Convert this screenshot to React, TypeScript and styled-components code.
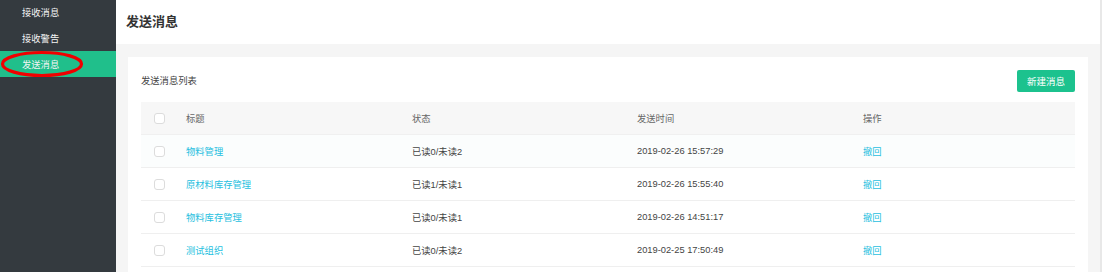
import styled, { createGlobalStyle } from "styled-components";

const GlobalStyle = createGlobalStyle`
  html, body {
    margin: 0;
    padding: 0;
    background: #f5f5f5;
    font-family: "Liberation Sans", "Noto Sans CJK SC", sans-serif;
    font-size: 9.3px;
    color: #333;
  }
  * { box-sizing: border-box; }
`;

const menu = [
  { label: "接收消息", active: false },
  { label: "接收警告", active: false },
  { label: "发送消息", active: true },
];

const rows = [
  { title: "物料管理", status: "已读0/未读2", time: "2019-02-26 15:57:29" },
  { title: "原材料库存管理", status: "已读1/未读1", time: "2019-02-26 15:55:40" },
  { title: "物料库存管理", status: "已读0/未读1", time: "2019-02-26 14:51:17" },
  { title: "测试组织", status: "已读0/未读2", time: "2019-02-25 17:50:49" },
];

const App = () => {
  return (
    <Layout>
      <GlobalStyle />
      <Sidebar>
        {menu.map((item) => (
          <MenuItem key={item.label} active={item.active}>
            {item.label}
          </MenuItem>
        ))}
        <Marker width="86" height="30" viewBox="0 0 86 30">
          <ellipse cx="42" cy="15" rx="39.5" ry="11.5" fill="none" stroke="#f00000" strokeWidth="3.2" />
        </Marker>
      </Sidebar>

      <Main>
        <Header>发送消息</Header>
        <Content>
          <Card>
            <CardHead>
              <CardTitle>发送消息列表</CardTitle>
              <PrimaryButton>新建消息</PrimaryButton>
            </CardHead>

            <Table>
              <HeadRow>
                <Cell>
                  <Check />
                </Cell>
                <Cell>标题</Cell>
                <Cell>状态</Cell>
                <Cell>发送时间</Cell>
                <Cell>操作</Cell>
              </HeadRow>
              {rows.map((row, i) => (
                <BodyRow key={row.time} hover={i === 0}>
                  <Cell>
                    <Check />
                  </Cell>
                  <Cell>
                    <Link>{row.title}</Link>
                  </Cell>
                  <Cell>{row.status}</Cell>
                  <Cell>{row.time}</Cell>
                  <Cell>
                    <Link>撤回</Link>
                  </Cell>
                </BodyRow>
              ))}
            </Table>
          </Card>
        </Content>
      </Main>
    </Layout>
  );
};

const Layout = styled.div`
  display: flex;
  width: 1102px;
  height: 272px;
  overflow: hidden;
`;

const Sidebar = styled.div`
  position: relative;
  width: 116px;
  flex-shrink: 0;
  background: #343a3f;
  margin-top: -1px;
`;

const MenuItem = styled.div<{ active?: boolean }>`
  height: 26px;
  line-height: 26px;
  padding-left: 22px;
  font-family: "Noto Sans CJK SC", sans-serif;
  font-size: 9.3px;
  color: #f4f4f4;
  background: ${({ active }) => (active ? "#20bf8b" : "transparent")};
`;

const Marker = styled.svg`
  position: absolute;
  left: 0;
  top: 50px;
`;

const Main = styled.div`
  flex: 1;
  display: flex;
  flex-direction: column;
  background: #f5f5f5;
  border-right: 2px solid #e8e8e8;
`;

const Header = styled.div`
  height: 44px;
  background: #fff;
  padding-left: 10px;
  line-height: 42px;
  font-family: "Noto Sans CJK SC", sans-serif;
  font-size: 13px;
  font-weight: bold;
  color: #333;
`;

const Content = styled.div`
  flex: 1;
  padding: 13px 12px 0 12px;
`;

const Card = styled.div`
  background: #fff;
  padding: 13px 13px 0 13px;
  height: 100%;
`;

const CardHead = styled.div`
  display: flex;
  align-items: center;
  justify-content: space-between;
  height: 22px;
  margin-bottom: 10px;
`;

const CardTitle = styled.div`
  font-family: "Noto Sans CJK SC", sans-serif;
  font-size: 9.3px;
  color: #444;
  padding-bottom: 2px;
`;

const PrimaryButton = styled.button`
  height: 22px;
  width: 58px;
  padding: 0;
  border: none;
  border-radius: 2px;
  background: #1cc28e;
  color: #fff;
  font-family: "Noto Sans CJK SC", sans-serif;
  font-size: 9.5px;
  line-height: 22px;
`;

const Table = styled.div`
  display: flex;
  flex-direction: column;
`;

const gridCols = "45px 226px 225px 226px 1fr";

const HeadRow = styled.div`
  display: grid;
  grid-template-columns: ${gridCols};
  height: 33px;
  align-items: center;
  background: #f7f7f7;
  border-bottom: 1px solid #f0f0f0;
  color: #666;
`;

const BodyRow = styled.div<{ hover?: boolean }>`
  display: grid;
  grid-template-columns: ${gridCols};
  height: 33px;
  align-items: center;
  background: ${({ hover }) => (hover ? "#fbfdfd" : "#fff")};
  border-bottom: 1px solid #efefef;
  color: #444;
`;

const Cell = styled.div`
  display: flex;
  align-items: center;
  font-family: "Liberation Sans", "Noto Sans CJK SC", sans-serif;
  font-size: 9.3px;
  white-space: nowrap;
  &:first-child {
    padding-left: 13px;
  }
`;

const Check = styled.span`
  display: inline-block;
  width: 11px;
  height: 11px;
  border: 1px solid #dcdcdc;
  border-radius: 3px;
  background: #fff;
`;

const Link = styled.span`
  color: #1fbfe0;
  cursor: pointer;
`;

export default App;
